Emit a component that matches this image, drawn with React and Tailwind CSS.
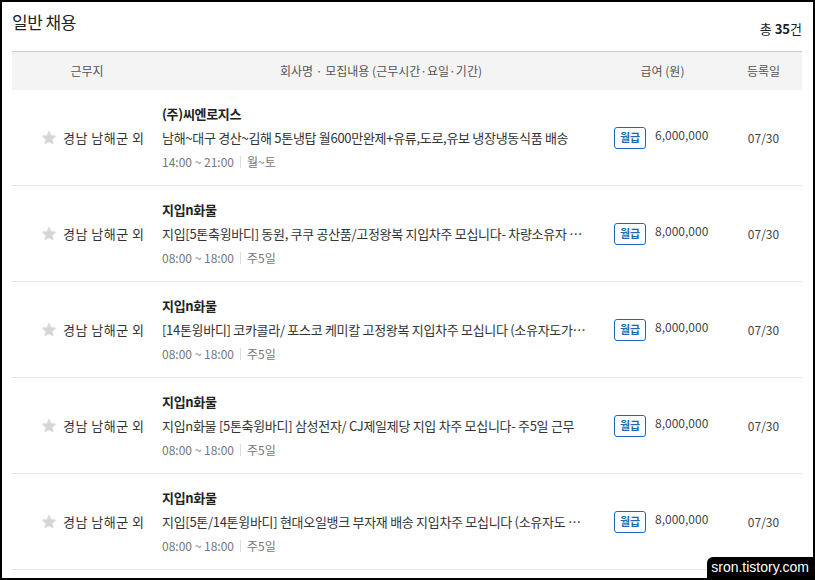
const jobs = [
  {
    company: "(주)씨엔로지스",
    desc: "남해~대구 경산~김해 5톤냉탑 월600만완제+유류,도로,유보 냉장냉동식품 배송",
    time: "14:00 ~ 21:00",
    days: "월~토",
    pay: "6,000,000",
  },
  {
    company: "지입n화물",
    desc: "지입[5톤축윙바디] 동원, 쿠쿠 공산품/고정왕복 지입차주 모십니다- 차량소유자 가능",
    time: "08:00 ~ 18:00",
    days: "주5일",
    pay: "8,000,000",
  },
  {
    company: "지입n화물",
    desc: "[14톤윙바디] 코카콜라/ 포스코 케미칼 고정왕복 지입차주 모십니다 (소유자도가능)",
    time: "08:00 ~ 18:00",
    days: "주5일",
    pay: "8,000,000",
  },
  {
    company: "지입n화물",
    desc: "지입n화물 [5톤축윙바디] 삼성전자/ CJ제일제당 지입 차주 모십니다- 주5일 근무",
    time: "08:00 ~ 18:00",
    days: "주5일",
    pay: "8,000,000",
  },
  {
    company: "지입n화물",
    desc: "지입[5톤/14톤윙바디] 현대오일뱅크 부자재 배송 지입차주 모십니다 (소유자도 가능)",
    time: "08:00 ~ 18:00",
    days: "주5일",
    pay: "8,000,000",
  },
];

function Star() {
  return (
    <svg width="16" height="15" viewBox="0 0 24 23" className="shrink-0">
      <path
        d="M12 0.8l3.4 7.3 7.9 0.9-5.9 5.4 1.6 7.8L12 18.3l-7 3.9 1.6-7.8L0.7 9l7.9-0.9z"
        fill="#d6d6d6"
      />
    </svg>
  );
}

export default function App() {
  return (
    <div
      className="relative w-[815px] h-[580px] border-2 border-black bg-white overflow-hidden text-[#333]"
      style={{ fontFamily: '"Noto Sans CJK KR", "Noto Sans", sans-serif' }}
    >
      <div className="pl-[10px] pr-[11px]">
        <div className="flex justify-between h-[49px] pt-[8px]">
          <h2 className="text-[17px] leading-[24px] text-[#222] tracking-[-0.5px]">일반 채용</h2>
          <p className="text-[13px] leading-[20px] mt-[9px] text-[#222]">
            총 <span className="font-bold">35</span>건
          </p>
        </div>

        <div className="grid grid-cols-[150px_438px_125px_1fr] items-center h-[39px] border-t border-[#cccccc] bg-[#f4f4f4] text-[12px] text-[#555]">
          <div className="text-center">근무지</div>
          <div className="text-center">회사명 · 모집내용 (근무시간·요일·기간)</div>
          <div className="text-center">급여 (원)</div>
          <div className="text-center">등록일</div>
        </div>

        {jobs.map((job, i) => (
          <div
            key={i}
            className="grid grid-cols-[150px_438px_125px_1fr] items-center h-[96px] border-b border-[#e6e6e6]"
          >
            <div className="flex items-center pl-[29px] gap-[6px] text-[13px] text-[#333]">
              <Star />
              <span className="tracking-[0.5px] whitespace-nowrap">경남 남해군 외</span>
            </div>
            <div className="flex flex-col min-w-0 pr-[14px]">
              <p className="text-[13px] leading-[24px] font-bold text-[#222] tracking-[-0.3px]">
                {job.company}
              </p>
              <p className="text-[13px] leading-[24px] text-[#333] truncate tracking-[-0.3px]">
                {job.desc}
              </p>
              <p className="flex items-center text-[12px] leading-[24px] text-[#777]">
                <span>{job.time}</span>
                <span className="mx-[6px] h-[12px] w-px bg-[#dddddd]" />
                <span>{job.days}</span>
              </p>
            </div>
            <div className="flex items-center gap-[9px] pl-[14px]">
              <span className="flex items-center justify-center w-[32px] h-[22px] border border-[#1a6bb3] rounded-[3px] text-[11px] font-bold text-[#1a6bb3]">
                월급
              </span>
              <span className="text-[12px] text-[#444] -mt-[5px]">{job.pay}</span>
            </div>
            <div className="text-center text-[12px] text-[#444]">07/30</div>
          </div>
        ))}
      </div>

      <div
        className="absolute right-0 bottom-0 bg-black rounded-tl-[6px] px-[4px] h-[21px] flex items-center text-white text-[14px]"
        style={{ fontFamily: '"Liberation Sans", sans-serif' }}
      >
        sron.tistory.com
      </div>
    </div>
  );
}
